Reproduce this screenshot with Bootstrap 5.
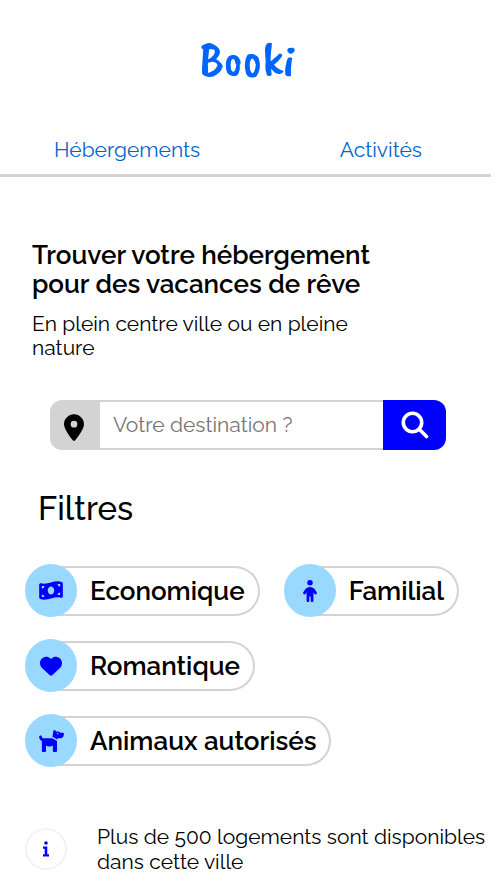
<!DOCTYPE html>
<html lang="fr">
<head>
<meta charset="utf-8">
<meta name="viewport" content="width=device-width, initial-scale=1">
<title>Booki</title>
<link href="https://cdn.jsdelivr.net/npm/bootstrap@5.3.0/dist/css/bootstrap.min.css" rel="stylesheet">
<style>
body { font-family: Raleway, Lato, sans-serif; font-size: 21px; line-height: 25px; color: #000; background: #fff; }
.page { width: 98%; }
.brand { font-family: "Caveat Brush", "Kaushan Script", Caveat, "Patrick Hand", "Dancing Script", Pacifico, "Roboto Condensed", "Open Sans Condensed", "DejaVu Sans Condensed", cursive; font-weight: 400; font-size: 50px; line-height: 60px; color: #0065fc; padding: 30px 0 30px 3px; }
.main-nav { border-bottom: 3px solid #d3d3d3; padding: 17px 69px 12px 54px; }
.main-nav a { color: #0065cc; }
.intro { padding: 64px 32px 0 32px; }
.intro-text { max-width: 350px; }
.headline { font-size: 26px; line-height: 29px; font-weight: 600; margin-bottom: 13px; }
.lead-in { line-height: 24px; margin-bottom: 0; }
.search { margin: 40px 45px 0 50px; height: 50px; }
.search-pin { width: 50px; background: #d3d3d3; border-radius: 12px 0 0 12px; padding: 4px 2px 0 0; }
.search .form-control { border: 2px solid #d3d3d3; border-width: 2px 0; border-radius: 0; font-size: 21px; padding: 0 13px; color: #000; }
.search .form-control::placeholder { color: #757575; }
.search-go { width: 63px; background: #00f; border: 0; border-radius: 0 12px 12px 0; padding: 0 0 0 2px; }
.filters { padding: 39px 25px 0; }
.filters-title { font-size: 33px; line-height: 40px; font-weight: 500; margin: 0 0 35px 13px; }
.filter-list { gap: 22px 24px; }
.filter { height: 53px; border: 0; background: none; padding: 0; color: #000; font-size: 26px; font-weight: 600; }
.filter-icon { width: 52px; height: 53px; background: #99d8ff; border-radius: 50%; z-index: 1; }
.filter-name { height: 50px; border: 2px solid #d3d3d3; border-left: 0; border-radius: 0 25px 25px 0; margin-left: -26px; padding: 2px 13px 0 39px; }
.info { padding: 57px 0 0 25px; gap: 30px; }
.info-icon { width: 42px; height: 42px; border: 2px solid #f2f2f2; border-radius: 50%; }
</style>
<script src="https://cdn.jsdelivr.net/npm/bootstrap@5.3.0/dist/js/bootstrap.bundle.min.js" defer></script>
</head>
<body>
<div class="page">
  <header>
    <div class="brand text-center">Booki</div>
    <nav class="main-nav d-flex justify-content-between">
      <a class="text-decoration-none" href="#hebergements">Hébergements</a>
      <a class="text-decoration-none" href="#activites">Activités</a>
    </nav>
  </header>
  <main>
    <section class="intro">
      <div class="intro-text">
        <h1 class="headline">Trouver votre hébergement pour des vacances de rêve</h1>
        <p class="lead-in">En plein centre ville ou en pleine nature</p>
      </div>
    </section>
    <form class="search d-flex" role="search">
      <label class="search-pin d-flex align-items-center justify-content-center flex-shrink-0" for="destination">
        <svg width="20" height="27" viewBox="0 0 384 512" role="img" aria-label="Destination"><path d="M215.700 499.200C267 435 384 279.400 384 192C384 86 298 0 192 0S0 86 0 192c0 87.400 117 243 168.300 307.200c12.300 15.300 35.100 15.300 47.400 0zM192 128a64 64 0 1 1 0 128 64 64 0 1 1 0-128z"/></svg>
      </label>
      <input class="form-control shadow-none" id="destination" type="text" placeholder="Votre destination ?">
      <button class="search-go d-flex align-items-center justify-content-center flex-shrink-0" type="submit" aria-label="Rechercher">
        <svg width="28" height="28" viewBox="0 0 28 28" fill="none" stroke="#fff" stroke-width="3.600" stroke-linecap="round" aria-hidden="true"><circle cx="11.500" cy="11.500" r="9.200"/><path d="M18.500 18.500L25.500 25.500"/></svg>
      </button>
    </form>
    <section class="filters">
      <h2 class="filters-title">Filtres</h2>
      <div class="filter-list d-flex flex-wrap">
        <button class="filter d-flex align-items-center" type="button">
          <span class="filter-icon d-flex align-items-center justify-content-center flex-shrink-0">
            <svg width="24" height="21" viewBox="0 0 576 512" fill="#00f" aria-hidden="true"><path d="M0 112.500V422.300c0 18 10.100 35 27 41.300c87 32.500 174 10.300 261-11.900c79.800-20.300 159.600-40.700 239.300-18.900c23 6.300 48.700-9.500 48.700-33.400V89.700c0-18-10.100-35-27-41.300C462 15.900 375 38.100 288 60.300C208.200 80.600 128.400 100.900 48.700 79.100C25.600 72.800 0 88.600 0 112.500zM288 352c-44.200 0-80-43-80-96s35.800-96 80-96s80 43 80 96s-35.800 96-80 96zM64 352c35.300 0 64 28.700 64 64H64V352zm64-208c0 35.300-28.700 64-64 64V144h64zM512 304v64H448c0-35.300 28.700-64 64-64zM448 96h64v64c-35.300 0-64-28.700-64-64z"/></svg>
          </span>
          <span class="filter-name d-flex align-items-center">Economique</span>
        </button>
        <button class="filter d-flex align-items-center" type="button">
          <span class="filter-icon d-flex align-items-center justify-content-center flex-shrink-0">
            <svg width="14" height="22" viewBox="0 0 320 512" fill="#00f" aria-hidden="true"><path d="M96 64a64 64 0 1 1 128 0A64 64 0 1 1 96 64zm48 320v96c0 17.700-14.300 32-32 32s-32-14.300-32-32V287.800L59.100 321c-9.400 15-29.200 19.400-44.100 10S-4.500 301.900 4.900 287l39.900-63.300C69.700 184 113.200 160 160 160s90.300 24 115.200 63.600L315.100 287c9.400 15 4.900 34.700-10 44.100s-34.700 4.900-44.100-10L240 287.800V480c0 17.700-14.300 32-32 32s-32-14.300-32-32V384H144z"/></svg>
          </span>
          <span class="filter-name d-flex align-items-center">Familial</span>
        </button>
        <button class="filter d-flex align-items-center" type="button">
          <span class="filter-icon d-flex align-items-center justify-content-center flex-shrink-0">
            <svg width="22" height="22" viewBox="0 0 512 512" fill="#00f" aria-hidden="true"><path d="M47.600 300.400L228.300 469.100c7.500 7 17.400 10.900 27.700 10.900s20.200-3.900 27.700-10.900L464.400 300.400c30.400-28.300 47.600-68 47.600-109.500v-5.800c0-69.900-50.500-129.500-119.400-141C347 36.500 300.600 51.400 268 84L256 96 244 84c-32.600-32.600-79-47.500-124.600-39.900C50.500 55.600 0 115.200 0 185.100v5.800c0 41.500 17.200 81.200 47.600 109.500z"/></svg>
          </span>
          <span class="filter-name d-flex align-items-center">Romantique</span>
        </button>
        <button class="filter d-flex align-items-center" type="button">
          <span class="filter-icon d-flex align-items-center justify-content-center flex-shrink-0">
            <svg width="25" height="22" viewBox="0 0 576 512" fill="#00f" aria-hidden="true"><path fill-rule="evenodd" d="M309.600 158.500L332.700 19.800C334.600 8.400 344.500 0 356.100 0c7.500 0 14.500 3.500 19 9.500L392 32h52.100c12.700 0 24.900 5.100 33.900 14.100L496 64h56c13.300 0 24 10.700 24 24v24c0 44.200-35.800 80-80 80H464 448 426.700l-5.100 30.500zM416 256.100V480c0 17.700-14.300 32-32 32H352c-17.700 0-32-14.300-32-32V364.800c-24 12.300-51.200 19.200-80 19.200s-56-6.900-80-19.200V480c0 17.700-14.300 32-32 32H96c-17.700 0-32-14.300-32-32V249.800c-28.800-10.900-51.400-35.300-59.200-66.500L1 167.800c-4.300-17.100 6.100-34.500 23.300-38.800s34.500 6.100 38.800 23.300l3.900 15.500C70.500 182 83.300 192 98 192h205.800zM448 80a16 16 0 1 0-32 0 16 16 0 1 0 32 0z"/></svg>
          </span>
          <span class="filter-name d-flex align-items-center">Animaux autorisés</span>
        </button>
      </div>
    </section>
    <section class="info d-flex align-items-center">
      <span class="info-icon d-flex align-items-center justify-content-center flex-shrink-0">
        <svg width="8" height="16" viewBox="0 0 8 16" fill="#00f" aria-hidden="true"><circle cx="4" cy="2" r="1.800"/><path d="M1 5.500h4.300v7.700H7V15.500H1V13.200h1.700V7.800H1z"/></svg>
      </span>
      <p class="mb-0">Plus de 500 logements sont disponibles dans cette ville</p>
    </section>
  </main>
</div>
</body>
</html>
